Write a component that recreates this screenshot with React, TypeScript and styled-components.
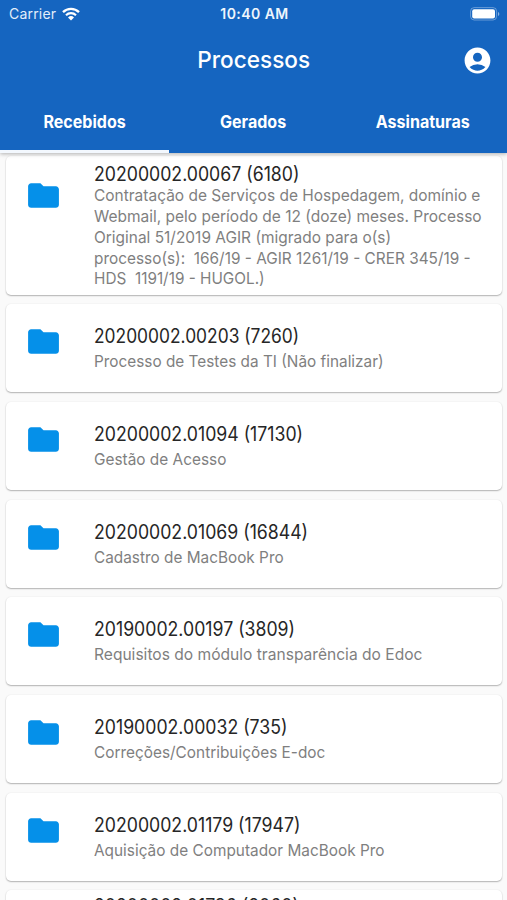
import React from "react";
import styled, { createGlobalStyle } from "styled-components";
import { MdAccountCircle, MdFolder } from "react-icons/md";

const GlobalStyle = createGlobalStyle`
  * { box-sizing: border-box; }
  body {
    margin: 0;
    background: #fafafa;
    font-family: Inter, "Liberation Sans", sans-serif;
  }
`;

const Screen = styled.div`
  height: 900px;
  display: flex;
  flex-direction: column;
  overflow: hidden;
  background: #fafafa;
`;

const Header = styled.header`
  flex: none;
  height: 153px;
  display: flex;
  flex-direction: column;
  color: #fff;
  background: #1565c0;
  box-shadow: 0 1px 4px rgba(0, 0, 0, 0.3);
  z-index: 1;
`;

const StatusBar = styled.div`
  display: grid;
  grid-template-columns: 1fr auto 1fr;
  align-items: center;
  height: 28px;
  padding: 0 7px 0 9px;
  font-size: 14px;
  line-height: 18px;
`;

const Carrier = styled.div`
  display: flex;
  align-items: center;
  gap: 6px;
  letter-spacing: 0.2px;
  color: #e3eefa;
`;

const Clock = styled.div`
  font-weight: 600;
  letter-spacing: 0.45px;
  color: #eef5fc;
`;

const BatterySlot = styled.div`
  display: flex;
  justify-content: flex-end;
`;

const TitleBar = styled.div`
  display: grid;
  grid-template-columns: 1fr auto 1fr;
  align-items: center;
  height: 64px;
  padding: 0 14px;
`;

const PageTitle = styled.h1`
  grid-column: 2;
  margin: 0;
  font-size: 23.5px;
  font-weight: 550;
  line-height: 30px;
  transform: scaleX(0.96);
`;

const ProfileButton = styled.button`
  justify-self: end;
  display: flex;
  padding: 0;
  border: 0;
  color: #fff;
  background: none;
`;

const Tabs = styled.nav`
  display: grid;
  grid-template-columns: repeat(3, 1fr);
  flex: 1;
`;

const Tab = styled.a<{ $active?: boolean }>`
  display: flex;
  align-items: center;
  justify-content: center;
  padding-top: 2px;
  padding-bottom: ${(p) => (p.$active ? 0 : 3)}px;
  border-bottom: ${(p) => (p.$active ? "3px solid #f3f8fe" : "0")};
  font-size: 17px;
  font-weight: 700;
`;

const TabLabel = styled.span`
  display: block;
  transform: scaleX(0.944);
`;

const List = styled.main`
  flex: 1;
  min-height: 0;
  display: flex;
  flex-direction: column;
  gap: 9.8px;
  padding: 3px 5px 0 6px;
  overflow: hidden;
`;

const Card = styled.article<{ $tall?: boolean }>`
  flex: none;
  display: grid;
  grid-template-columns: 88px 1fr;
  height: ${(p) => (p.$tall ? 138.5 : 87.9)}px;
  padding-top: ${(p) => (p.$tall ? 6 : 20)}px;
  border-radius: 5px;
  background: #fff;
  box-shadow: 0 1px 1.5px rgba(0, 0, 0, 0.28), 0 0 2px rgba(0, 0, 0, 0.07);

  &:last-child {
    padding-top: 4px;
  }
`;

const FolderIcon = styled(MdFolder)<{ $tall?: boolean }>`
  margin: ${(p) => (p.$tall ? 15 : -1)}px 0 0 19px;
  color: #0590e9;
`;

const Number = styled.div<{ $stretch?: number }>`
  width: max-content;
  color: #262626;
  font-size: 19.5px;
  line-height: 24px;
  white-space: pre;
  transform: scaleX(${(p) => p.$stretch ?? 0.907});
  transform-origin: left;
`;

const Lines = styled.div<{ $tall?: boolean }>`
  padding-top: ${(p) => (p.$tall ? 0 : 3)}px;
  margin-top: ${(p) => (p.$tall ? -0.6 : 0)}px;
`;

const Line = styled.div<{ $stretch: number }>`
  width: max-content;
  color: #7f7f7f;
  font-size: 16.5px;
  line-height: 20.7px;
  white-space: pre;
  transform: scaleX(${(p) => p.$stretch});
  transform-origin: left;
`;

type Process = { number: string; stretch?: number; lines: [string, number][]; tall?: boolean };

const processes: Process[] = [
  {
    number: "20200002.00067 (6180)",
    tall: true,
    lines: [
      ["Contratação de Serviços de Hospedagem, domínio e", 0.938],
      ["Webmail, pelo período de 12 (doze) meses. Processo", 0.939],
      ["Original 51/2019 AGIR (migrado para o(s)", 0.936],
      ["processo(s):  166/19 - AGIR 1261/19 - CRER 345/19 -", 0.932],
      ["HDS  1191/19 - HUGOL.)", 0.929],
    ],
  },
  { number: "20200002.00203 (7260)", stretch: 0.891, lines: [["Processo de Testes da TI (Não finalizar)", 0.93]] },
  { number: "20200002.01094 (17130)", lines: [["Gestão de Acesso", 0.932]] },
  { number: "20200002.01069 (16844)", lines: [["Cadastro de MacBook Pro", 0.93]] },
  { number: "20190002.00197 (3809)", lines: [["Requisitos do módulo transparência do Edoc", 0.944]] },
  { number: "20190002.00032 (735)", lines: [["Correções/Contribuições E-doc", 0.932]] },
  { number: "20200002.01179 (17947)", lines: [["Aquisição de Computador MacBook Pro", 0.932]] },
  { number: "20200002.01736 (8060)", tall: true, lines: [] },
];

function WifiIcon() {
  return (
    <svg width="18" height="14" viewBox="0 0 18 14" fill="none" stroke="#fff">
      <path d="M1 5.1 A11.3 11.3 0 0 1 17 5.1" strokeWidth="2.3" />
      <path d="M4 8.2 A7.1 7.1 0 0 1 14 8.2" strokeWidth="2.1" />
      <path d="M9 13.4 L6 10.4 A4.3 4.3 0 0 1 12 10.4 Z" fill="#fff" stroke="none" />
    </svg>
  );
}

function BatteryIcon() {
  return (
    <svg width="30" height="14" viewBox="0 0 30 14">
      <rect x="0.6" y="0.6" width="26" height="12.4" rx="3.6" fill="none" stroke="#fff" strokeOpacity="0.35" />
      <rect x="2.2" y="2.2" width="22.8" height="9.2" rx="2" fill="#fff" />
      <path d="M28 5 C29.8 5.6 29.8 8.4 28 9 Z" fill="#fff" fillOpacity="0.5" />
    </svg>
  );
}

export default function App() {
  return (
    <>
      <GlobalStyle />
      <Screen>
        <Header>
          <StatusBar>
            <Carrier>
              Carrier
              <WifiIcon />
            </Carrier>
            <Clock>10:40 AM</Clock>
            <BatterySlot>
              <BatteryIcon />
            </BatterySlot>
          </StatusBar>
          <TitleBar>
            <PageTitle>Processos</PageTitle>
            <ProfileButton aria-label="Perfil">
              <MdAccountCircle size={31} />
            </ProfileButton>
          </TitleBar>
          <Tabs>
            <Tab $active>
              <TabLabel>Recebidos</TabLabel>
            </Tab>
            <Tab>
              <TabLabel>Gerados</TabLabel>
            </Tab>
            <Tab>
              <TabLabel>Assinaturas</TabLabel>
            </Tab>
          </Tabs>
        </Header>
        <List>
          {processes.map((p) => (
            <Card key={p.number} $tall={p.tall}>
              <FolderIcon size={37} $tall={p.tall} />
              <div>
                <Number $stretch={p.stretch}>{p.number}</Number>
                <Lines $tall={p.tall}>
                  {p.lines.map(([text, stretch]) => (
                    <Line key={text} $stretch={stretch}>
                      {text}
                    </Line>
                  ))}
                </Lines>
              </div>
            </Card>
          ))}
        </List>
      </Screen>
    </>
  );
}
